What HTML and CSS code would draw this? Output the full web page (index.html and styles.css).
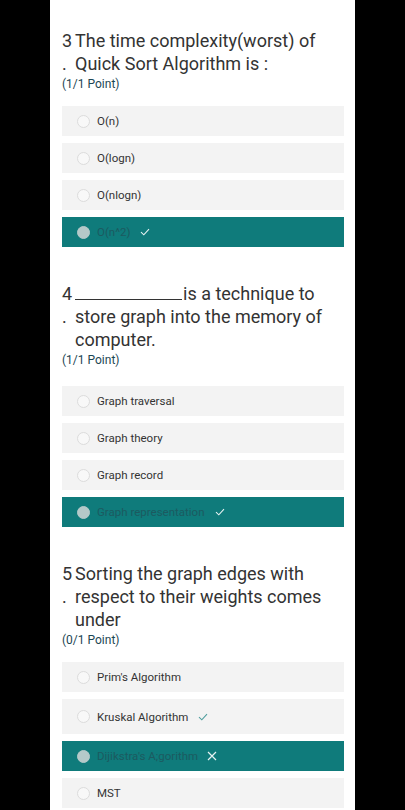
FILE: index.html
```html
<!DOCTYPE html>
<html>
<head>
<meta charset="utf-8">
<link rel="stylesheet" href="styles.css">
</head>
<body>
<main class="sheet">
  <section class="question">
    <div class="q-title">
      <div class="q-num">3<br>.</div>
      <div class="q-text">The time complexity(worst) of Quick Sort Algorithm is :</div>
    </div>
    <div class="q-points">(1/1 Point)</div>
    <div class="options">
      <div class="option"><span class="radio"></span><span class="label">O(n)</span></div>
      <div class="option"><span class="radio"></span><span class="label">O(logn)</span></div>
      <div class="option"><span class="radio"></span><span class="label">O(nlogn)</span></div>
      <div class="option selected"><span class="radio"></span><span class="label">O(n^2)</span>
        <svg class="mark check" viewBox="0 0 10 8" width="10" height="8"><path d="M1 4.2 L3.8 6.8 L9 1.2" fill="none" stroke="#e6f2f2" stroke-width="1.1"/></svg></div>
    </div>
  </section>

  <section class="question">
    <div class="q-title">
      <div class="q-num">4<br>.</div>
      <div class="q-text"><span class="blank"></span>is a technique to store graph into the memory of computer.</div>
    </div>
    <div class="q-points">(1/1 Point)</div>
    <div class="options q4">
      <div class="option"><span class="radio"></span><span class="label">Graph traversal</span></div>
      <div class="option"><span class="radio"></span><span class="label">Graph theory</span></div>
      <div class="option"><span class="radio"></span><span class="label">Graph record</span></div>
      <div class="option selected"><span class="radio"></span><span class="label">Graph representation</span>
        <svg class="mark check" viewBox="0 0 10 8" width="10" height="8"><path d="M1 4.2 L3.8 6.8 L9 1.2" fill="none" stroke="#e6f2f2" stroke-width="1.1"/></svg></div>
    </div>
  </section>

  <section class="question">
    <div class="q-title">
      <div class="q-num">5<br>.</div>
      <div class="q-text">Sorting the graph edges with respect to their weights comes under</div>
    </div>
    <div class="q-points">(0/1 Point)</div>
    <div class="options">
      <div class="option"><span class="radio"></span><span class="label">Prim's Algorithm</span></div>
      <div class="option tall"><span class="radio"></span><span class="label">Kruskal Algorithm</span>
        <svg class="mark check" viewBox="0 0 10 8" width="10" height="8"><path d="M1 4.2 L3.8 6.8 L9 1.2" fill="none" stroke="#4f9e9e" stroke-width="1.1"/></svg></div>
      <div class="option selected"><span class="radio"></span><span class="label">Dijikstra's A;gorithm</span>
        <svg class="mark cross" viewBox="0 0 10 10" width="10" height="10"><path d="M1 1 L9 9 M9 1 L1 9" fill="none" stroke="#e6f2f2" stroke-width="1.2"/></svg></div>
      <div class="option"><span class="radio"></span><span class="label">MST</span></div>
    </div>
  </section>
</main>
</body>
</html>
```

FILE: styles.css
```css
html, body {
  margin: 0;
  padding: 0;
  background: #000;
}
body {
  font-family: Roboto, "Noto Sans", Arial, sans-serif;
  color: #333;
}
.sheet {
  width: 305px;
  margin-left: 50px;
  min-height: 810px;
  background: #fff;
  box-sizing: border-box;
  padding: 29px 11px 0 12px;
}
.question {
  margin-bottom: 35px;
}
.q-title {
  display: flex;
  font-size: 18px;
  line-height: 23px;
  color: #333;
}
.q-num {
  width: 13px;
  flex: none;
}
.q-text {
  flex: 1;
}
.blank {
  display: inline-block;
  width: 107px;
  border-bottom: 1px solid #333;
  height: 17px;
  margin-right: 1px;
}
.q-points {
  font-size: 12px;
  line-height: 16px;
  color: #1c4654;
  margin-top: 1px;
}
.options {
  margin-top: 14px;
  display: flex;
  flex-direction: column;
  gap: 7px;
}
.options.q4 {
  margin-top: 18px;
}
.option {
  height: 30px;
  background: #f3f3f3;
  display: flex;
  align-items: center;
  padding-left: 15px;
  font-size: 11.5px;
  color: #333;
}
.option.tall {
  height: 35px;
}
.radio {
  width: 11px;
  height: 11px;
  border-radius: 50%;
  border: 1px solid #dcdcdc;
  background: #f8f8f8;
  margin-right: 7px;
  flex: none;
}
.option.selected {
  background: #0f7b7b;
  color: #1c5a60;
}
.option.selected .radio {
  background: #b4c9c9;
  border-color: #b4c9c9;
}
.mark {
  margin-left: 10px;
  flex: none;
}
.mark.cross {
  margin-left: 9px;
}
```
